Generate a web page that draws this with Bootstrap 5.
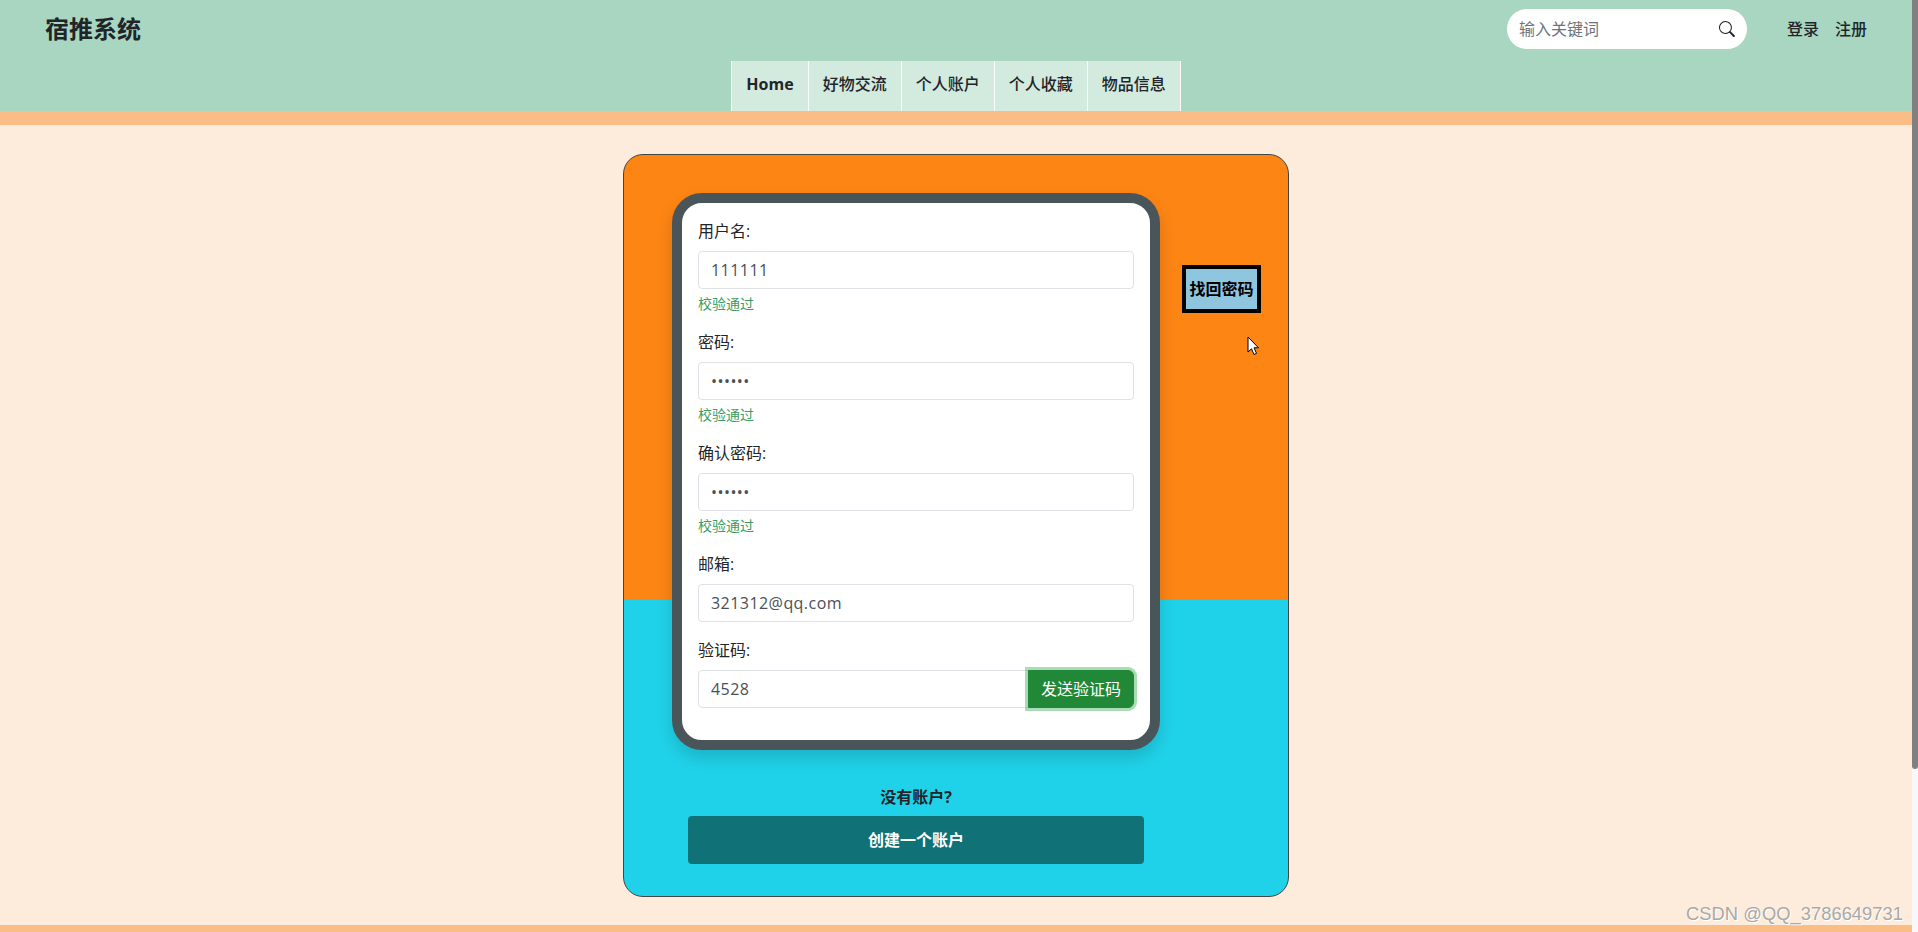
<!DOCTYPE html>
<html lang="zh-CN">
<head>
    <meta charset="UTF-8">
    <meta name="viewport" content="width=device-width, initial-scale=1.0">
    <title>宿推系统</title>
    <link rel="stylesheet" href="https://cdn.jsdelivr.net/npm/bootstrap@5.3.0/dist/css/bootstrap.min.css">
    <style>
        html, body { height: 100%; overflow: hidden; }
        body { font-family: "Open Sans", "Noto Sans CJK SC", sans-serif; background: #fdecdc; color: #212529; font-size: 16px; }
        .app-frame { height: 932px; }
        .app-page { flex: 1 1 auto; min-width: 0; position: relative; }
        .fake-scroll { width: 6px; background: #f8f8fb; flex: none; }
        .fake-thumb { height: 769px; background: #808080; border-radius: 0 0 3px 3px; }
        .top-head { background: #a8d6c0; height: 111px; }
        .head-row { height: 58px; padding: 0 45px; margin-bottom: 3px; }
        .brand-name { font-size: 24px; font-weight: 700; color: #212529; text-decoration: none; }
        .search-pill { width: 240px; height: 40px; background: #fff; border-radius: 20px; padding: 0 12px; }
        .search-pill input { border: 0; outline: 0; padding: 0; flex: 1 1 auto; min-width: 0; background: transparent; font-size: 16px; }
        .search-pill input::placeholder { color: #6c757d; }
        .head-links { margin-left: 40px; gap: 16px; }
        .head-links a { color: #212529; text-decoration: none; font-weight: 500; }
        .main-nav { height: 50px; }
        .main-nav a { display: block; height: 50px; line-height: 47px; padding: 0 14px; color: #212529; text-decoration: none; font-weight: 500; background: #d3eade; border-left: 1px solid rgba(255, 255, 255, .85); }
        .main-nav li:last-child a { border-right: 1px solid rgba(255, 255, 255, .85); }
        .main-nav a.on-page { font-weight: 700; }
        .band { height: 14px; background: #f9bd85; }
        .login-sheet { width: 666px; height: 743px; margin: 29px auto 28px; border: 1px solid #444; border-radius: 20px; background: linear-gradient(to bottom, #fd8514 60%, #20d2e9 60%); padding: 38px 27px 0 48px; }
        .form-shell { width: 488px; background: #fff; border: 10px solid #4a5559; border-radius: 30px; padding: 16px; box-shadow: 0 8px 16px rgba(0, 0, 0, .15); }
        .form-shell .form-control { height: 38px; color: #495057; border-color: #dee2e6; border-radius: 4px; letter-spacing: .45px; }
        .form-shell .form-label { margin-bottom: 8px; }
        .pass-note { margin-top: 4px; font-size: 14px; color: #3d9c5f; line-height: 21px; }
        .send-btn { background: #218838; border-color: #218838; color: #fff; box-shadow: 0 0 0 3px rgba(40, 167, 69, .4); position: relative; z-index: 5; }
        .find-btn { width: 79px; height: 48px; margin: 72px 0 0 22px; padding: 0; background: #8ec6e0; border: 4px solid #000; border-radius: 0; font-weight: 700; color: #000; }
        .signup-area { width: 456px; margin: 35px 0 0 16px; }
        .signup-area p { font-weight: 700; margin: 0 0 7px; line-height: 24px; }
        .signup-btn { height: 48px; background: #107176; color: #fff; font-weight: 700; border: 0; border-radius: 4px; width: 100%; }
        .page-end { height: 40px; background: #f9bd85; }
        .mouse-mark { position: absolute; left: 1247px; top: 336px; }
        .wm-text { position: absolute; left: 1686px; top: 903px; font-family: "Liberation Sans", sans-serif; font-size: 18.4px; line-height: 22px; color: #a8a8a8; text-shadow: 1px 1px 0 #fff; white-space: nowrap; }
    </style>
</head>
<body>
    <div class="app-frame d-flex">
        <div class="app-page">
            <header class="top-head">
                <div class="head-row d-flex align-items-center justify-content-between">
                    <a href="#" class="brand-name">宿推系统</a>
                    <div class="d-flex align-items-center">
                        <form class="search-pill d-flex align-items-center">
                            <input type="text" placeholder="输入关键词">
                            <svg width="16" height="16" viewBox="0 0 16 16" fill="#212529"><path d="M11.742 10.344a6.5 6.5 0 1 0-1.397 1.398h-.001c.03.04.062.078.098.115l3.85 3.85a1 1 0 0 0 1.415-1.414l-3.85-3.85a1.007 1.007 0 0 0-.115-.1zM12 6.5a5.5 5.5 0 1 1-11 0 5.5 5.5 0 0 1 11 0z"/></svg>
                        </form>
                        <div class="head-links d-flex">
                            <a href="#">登录</a>
                            <a href="#">注册</a>
                        </div>
                    </div>
                </div>
                <ul class="main-nav list-unstyled d-flex justify-content-center m-0">
                    <li><a href="#" class="on-page">Home</a></li>
                    <li><a href="#">好物交流</a></li>
                    <li><a href="#">个人账户</a></li>
                    <li><a href="#">个人收藏</a></li>
                    <li><a href="#">物品信息</a></li>
                </ul>
            </header>
            <div class="band"></div>

            <main class="login-sheet">
                <div class="d-flex align-items-start">
                    <form class="form-shell flex-shrink-0">
                        <div class="mb-3">
                            <label class="form-label">用户名:</label>
                            <input type="text" class="form-control" value="111111">
                            <div class="pass-note">校验通过</div>
                        </div>
                        <div class="mb-3">
                            <label class="form-label">密码:</label>
                            <input type="password" class="form-control" value="111111">
                            <div class="pass-note">校验通过</div>
                        </div>
                        <div class="mb-3">
                            <label class="form-label">确认密码:</label>
                            <input type="password" class="form-control" value="111111">
                            <div class="pass-note">校验通过</div>
                        </div>
                        <div class="mb-3">
                            <label class="form-label">邮箱:</label>
                            <input type="email" class="form-control" value="321312@qq.com">
                        </div>
                        <div class="mb-3">
                            <label class="form-label">验证码:</label>
                            <div class="input-group">
                                <input type="text" class="form-control" value="4528">
                                <button type="button" class="btn send-btn">发送验证码</button>
                            </div>
                        </div>
                    </form>
                    <button type="button" class="btn find-btn flex-shrink-0">找回密码</button>
                </div>
                <div class="signup-area text-center">
                    <p>没有账户?</p>
                    <button type="button" class="btn signup-btn">创建一个账户</button>
                </div>
            </main>
            <div class="page-end"></div>

            <svg class="mouse-mark" width="13" height="20" viewBox="0 0 13 20"><path d="M1 1 L1 16 L4.5 12.8 L7 18.5 L9.5 17.4 L7 11.8 L11.5 11.8 Z" fill="#fff" stroke="#000" stroke-width="1"/></svg>
            <div class="wm-text">CSDN @QQ_3786649731</div>
        </div>
        <div class="fake-scroll"><div class="fake-thumb"></div></div>
    </div>
    <script src="https://cdn.jsdelivr.net/npm/bootstrap@5.3.0/dist/js/bootstrap.bundle.min.js"></script>
</body>
</html>
